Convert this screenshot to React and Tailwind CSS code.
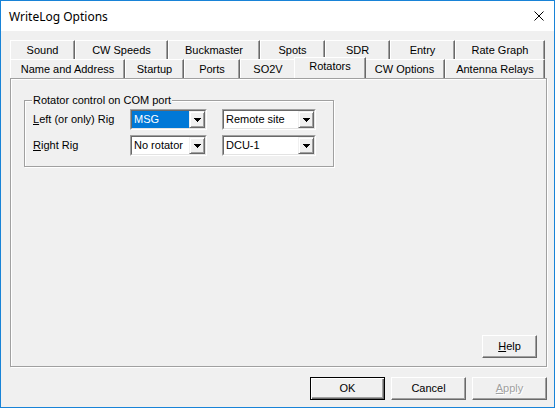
import React from "react";

const row1 = [
  ["Sound", 65],
  ["CW Speeds", 93],
  ["Buckmaster", 92],
  ["Spots", 65],
  ["SDR", 65],
  ["Entry", 65],
  ["Rate Graph", 90],
];

const row2 = [
  ["Name and Address", 115],
  ["Startup", 59],
  ["Ports", 56],
  ["SO2V", 56],
  ["Rotators", 68],
  ["CW Options", 81],
  ["Antenna Relays", 100],
];

function Tab({ label, width, selected }) {
  if (selected) {
    return (
      <div
        className="relative z-10 -mx-[2px] -mt-[2px] flex h-[21px] justify-center border-t border-l border-r border-t-white border-l-white border-r-[#696969] bg-[#f0f0f0] pt-[2px] shadow-[inset_-1px_0_0_#a0a0a0]"
        style={{ width: width + 4 }}
      >
        {label}
      </div>
    );
  }
  return (
    <div
      className="flex h-[19px] justify-center border-t border-l border-r border-t-white border-l-white border-r-[#696969] pt-[3px] shadow-[inset_-1px_0_0_#a0a0a0]"
      style={{ width }}
    >
      {label}
    </div>
  );
}

function Arrow() {
  return (
    <svg width="7" height="4" viewBox="0 0 7 4">
      <path d="M0 0h7v1h-1v1h-1v1h-1v1h-1v-1h-1v-1h-1v-1h-1z" fill="#000" />
    </svg>
  );
}

function Combo({ value, width, selected }) {
  return (
    <div
      className="flex h-[21px] border border-t-[#a0a0a0] border-l-[#a0a0a0] border-r-white border-b-white"
      style={{ width }}
    >
      <div className="flex flex-1 border border-t-[#696969] border-l-[#696969] border-r-[#e3e3e3] border-b-[#e3e3e3] bg-white">
        <div
          className={
            selected
              ? "flex flex-1 items-center bg-[#0078d7] pl-[2px] text-white"
              : "flex flex-1 items-center pl-[2px]"
          }
        >
          {value}
        </div>
        <div className="flex w-[16px] items-center justify-center border border-t-[#f0f0f0] border-l-[#f0f0f0] border-r-[#696969] border-b-[#696969] bg-[#f0f0f0] shadow-[inset_1px_1px_0_#fff,inset_-1px_-1px_0_#a0a0a0]">
          <Arrow />
        </div>
      </div>
    </div>
  );
}

function Button({ children, width = 75, isDefault, disabled }) {
  const frame = isDefault
    ? "border border-black shadow-[inset_1px_1px_0_#fff,inset_-1px_-1px_0_#696969,inset_-2px_-2px_0_#a0a0a0]"
    : "border border-t-white border-l-white border-r-[#696969] border-b-[#696969] shadow-[inset_-1px_-1px_0_#a0a0a0]";
  return (
    <div
      className={`flex h-[23px] items-center justify-center bg-[#f0f0f0] ${frame} ${
        disabled ? "text-[#a0a0a0] [text-shadow:1px_1px_0_#fff]" : ""
      }`}
      style={{ width }}
    >
      {children}
    </div>
  );
}

export default function App() {
  return (
    <div className="flex h-[408px] w-[555px] flex-col border border-[#1883d7] bg-[#f0f0f0] font-['Liberation_Sans',Arial,sans-serif] text-[11px] leading-[13px] text-black">
      {/* title bar */}
      <div className="flex h-[30px] items-center bg-white pl-[8px] pr-[10px]">
        <span className="font-['Noto_Sans',sans-serif] text-[12px]">WriteLog Options</span>
        <svg className="ml-auto" width="10" height="10" viewBox="0 0 10 10">
          <path d="M0.5 0.5L9.5 9.5M9.5 0.5L0.5 9.5" stroke="#000" strokeWidth="1" />
        </svg>
      </div>

      <div className="flex flex-1 flex-col pl-[9px] pr-[7px] pt-[9px]">
        {/* tabs */}
        <div className="flex">
          {row1.map(([l, w]) => (
            <Tab key={l} label={l} width={w} />
          ))}
        </div>
        <div className="flex">
          {row2.map(([l, w]) => (
            <Tab key={l} label={l} width={w} selected={l === "Rotators"} />
          ))}
        </div>

        {/* page */}
        <div className="flex h-[289px] flex-col border border-[#a0a0a0] pb-[8px] pl-[13px] pr-[9px] pt-[21px] shadow-[inset_1px_1px_0_#fff,1px_1px_0_#fff]">
          <div className="relative flex h-[67px] w-[310px] flex-col gap-[5px] border border-[#a0a0a0] pl-[8px] pt-[8px] shadow-[inset_1px_1px_0_#fff,1px_1px_0_#fff]">
            <span className="absolute left-[7px] top-[-7px] bg-[#f0f0f0] px-[1px]">
              Rotator control on COM port
            </span>
            <div className="flex items-center">
              <span className="w-[97px]">
                <span className="underline">L</span>eft (or only) Rig
              </span>
              <Combo value="MSG" width={77} selected />
              <div className="w-[15px]" />
              <Combo value="Remote site" width={94} />
            </div>
            <div className="flex items-center">
              <span className="w-[97px]">
                <span className="underline">R</span>ight Rig
              </span>
              <Combo value="No rotator" width={77} />
              <div className="w-[15px]" />
              <Combo value="DCU-1" width={94} />
            </div>
          </div>
          <div className="mt-auto flex justify-end">
            <Button width={55}>
              <span className="underline">H</span>elp
            </Button>
          </div>
        </div>

        {/* dialog buttons */}
        <div className="mt-[10px] flex justify-end gap-[6px]">
          <Button isDefault>OK</Button>
          <Button>Cancel</Button>
          <Button disabled>
            <span className="underline">A</span>pply
          </Button>
        </div>
      </div>
    </div>
  );
}
